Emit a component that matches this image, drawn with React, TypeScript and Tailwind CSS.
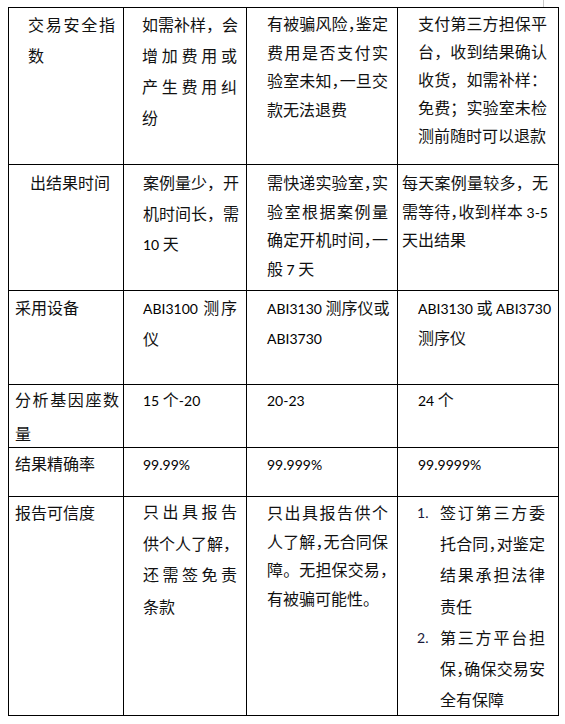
import React from 'react'

type Line = { t: string; j?: boolean }
type Cell = {
  box: string // padding + offset classes
  lh: string // line height + height classes
  w: string // text box width
  lines?: Line[]
  list?: Line[][]
}

// ',' in the data marks a half-width (compressed) Chinese comma
const ASCII = /^[A-Za-z0-9.%\- ]+$/

function Runs({ text }: { text: string }) {
  const parts = text.split(/([A-Za-z0-9.%\- ]+|,)/).filter(Boolean)
  return (
    <>
      {parts.map((p, i) =>
        p === ',' ? (
          <span key={i} className="[font-feature-settings:'halt']">，</span>
        ) : ASCII.test(p) ? (
          <span key={i} className="font-['Lato'] text-[14px] text-black">{p}</span>
        ) : (
          <span key={i}>{p}</span>
        )
      )}
    </>
  )
}

function Lines({ lines, lh, w }: { lines: Line[]; lh: string; w: string }) {
  return (
    <div className={w}>
      {lines.map((l, i) => (
        <div
          key={i}
          className={`${lh} whitespace-nowrap ${l.j ? 'text-justify [text-align-last:justify]' : 'text-left'}`}
        >
          <Runs text={l.t} />
        </div>
      ))}
    </div>
  )
}

const J = (t: string): Line => ({ t, j: true })
const L = (t: string): Line => ({ t })

const rows: Cell[][] = [
  [
    { box: 'pl-[19px] pt-[1px]', lh: 'h-[31px] leading-[31px]', w: 'w-[87px]', lines: [J('交易安全指'), L('数')] },
    { box: 'pl-[18px] pt-[1px]', lh: 'h-[31px] leading-[31px]', w: 'w-[95px]', lines: [J('如需补样，会'), J('增加费用或'), J('产生费用纠'), L('纷')] },
    { box: 'pl-[20px] pt-[1px]', lh: 'h-[28.5px] leading-[28.5px]', w: 'w-[121px]', lines: [J('有被骗风险,鉴定'), J('费用是否支付实'), J('验室未知,一旦交'), L('款无法退费')] },
    { box: 'pl-[20px] pt-[1px]', lh: 'h-[28px] leading-[28px]', w: 'w-[129px]', lines: [J('支付第三方担保平'), J('台，收到结果确认'), J('收货，如需补样：'), J('免费；实验室未检'), L('测前随时可以退款')] },
  ],
  [
    { box: 'pl-[21px] pt-[2px]', lh: 'h-[31px] leading-[31px]', w: 'w-[90px]', lines: [L('出结果时间')] },
    { box: 'pl-[19px] pt-[2px]', lh: 'h-[30.5px] leading-[30.5px]', w: 'w-[94px]', lines: [J('案例量少，开'), J('机时间长，需'), L('10 天')] },
    { box: 'pl-[20px] pt-[3px]', lh: 'h-[28.7px] leading-[28.7px]', w: 'w-[121px]', lines: [J('需快递实验室,实'), J('验室根据案例量'), J('确定开机时间,一'), L('般 7 天')] },
    { box: 'pl-[4px] pt-[3px]', lh: 'h-[28.5px] leading-[28.5px]', w: 'w-[146px]', lines: [J('每天案例量较多，无'), J('需等待,收到样本 3-5'), L('天出结果')] },
  ],
  [
    { box: 'pl-[6px] pt-[1px]', lh: 'h-[30px] leading-[30px]', w: 'w-[104px]', lines: [L('采用设备')] },
    { box: 'pl-[19px] pt-[1px]', lh: 'h-[31px] leading-[31px]', w: 'w-[94px]', lines: [J('ABI3100 测序'), L('仪')] },
    { box: 'pl-[20px] pt-[1px]', lh: 'h-[30px] leading-[30px]', w: 'w-[121px]', lines: [J('ABI3130 测序仪或'), L('ABI3730')] },
    { box: 'pl-[20px] pt-[1px]', lh: 'h-[30px] leading-[30px]', w: 'w-[131px]', lines: [J('ABI3130 或 ABI3730'), L('测序仪')] },
  ],
  [
    { box: 'pl-[6px] -mt-[3px]', lh: 'h-[34px] leading-[34px]', w: 'w-[104px]', lines: [J('分析基因座数'), L('量')] },
    { box: 'pl-[19px] pt-[1px]', lh: 'h-[26px] leading-[26px]', w: 'w-[94px]', lines: [L('15 个-20')] },
    { box: 'pl-[20px] pt-[1px]', lh: 'h-[26px] leading-[26px]', w: 'w-[121px]', lines: [L('20-23')] },
    { box: 'pl-[20px] pt-[1px]', lh: 'h-[26px] leading-[26px]', w: 'w-[129px]', lines: [L('24 个')] },
  ],
  [
    { box: 'pl-[6px] pt-[1px]', lh: 'h-[28px] leading-[28px]', w: 'w-[104px]', lines: [L('结果精确率')] },
    { box: 'pl-[19px] pt-[1px]', lh: 'h-[28px] leading-[28px]', w: 'w-[94px]', lines: [L('99.99%')] },
    { box: 'pl-[20px] pt-[1px]', lh: 'h-[28px] leading-[28px]', w: 'w-[121px]', lines: [L('99.999%')] },
    { box: 'pl-[20px] pt-[1px]', lh: 'h-[28px] leading-[28px]', w: 'w-[129px]', lines: [L('99.9999%')] },
  ],
  [
    { box: 'pl-[6px] pt-[1px]', lh: 'h-[28px] leading-[28px]', w: 'w-[104px]', lines: [L('报告可信度')] },
    { box: 'pl-[19px] -mt-[1px]', lh: 'h-[31.7px] leading-[31.7px]', w: 'w-[94px]', lines: [J('只出具报告'), J('供个人了解，'), J('还需签免责'), L('条款')] },
    { box: 'pl-[20px] pt-[1px]', lh: 'h-[28.5px] leading-[28.5px]', w: 'w-[121px]', lines: [J('只出具报告供个'), J('人了解,无合同保'), J('障。无担保交易,'), L('有被骗可能性。')] },
    {
      box: 'pl-[19px]',
      lh: 'h-[31.2px] leading-[31.2px]',
      w: 'w-[105px]',
      list: [
        [J('签订第三方委'), J('托合同,对鉴定'), J('结果承担法律'), L('责任')],
        [J('第三方平台担'), J('保,确保交易安'), L('全有保障')],
      ],
    },
  ],
]

export default function App() {
  return (
    <div className="relative w-[565px] h-[724px] bg-white pt-[7px] pl-[8px] font-['Noto_Sans_CJK_SC',sans-serif] text-[16px] text-[#111]">
      {/* page corner marker */}
      <span className="absolute left-[543px] top-0 h-[7px] w-px bg-[#c8c8c8]" />
      <div className="grid w-[551px] grid-cols-[115px_123px_151px_161px] grid-rows-[157px_126px_94px_63px_49px_219px] border-l border-t border-black">
        {rows.map((row, ri) =>
          row.map((c, ci) => (
            <div key={`${ri}-${ci}`} className="border-r border-b border-black">
              <div className={c.box}>
                {c.lines && <Lines lines={c.lines} lh={c.lh} w={c.w} />}
                {c.list &&
                  c.list.map((item, ii) => (
                    <div key={ii} className="flex">
                      <div className={`w-[23px] ${c.lh} font-['Lato'] text-[14px] text-[#1a1a3a]`}>{ii + 1}.</div>
                      <Lines lines={item} lh={c.lh} w={c.w} />
                    </div>
                  ))}
              </div>
            </div>
          ))
        )}
      </div>
    </div>
  )
}
